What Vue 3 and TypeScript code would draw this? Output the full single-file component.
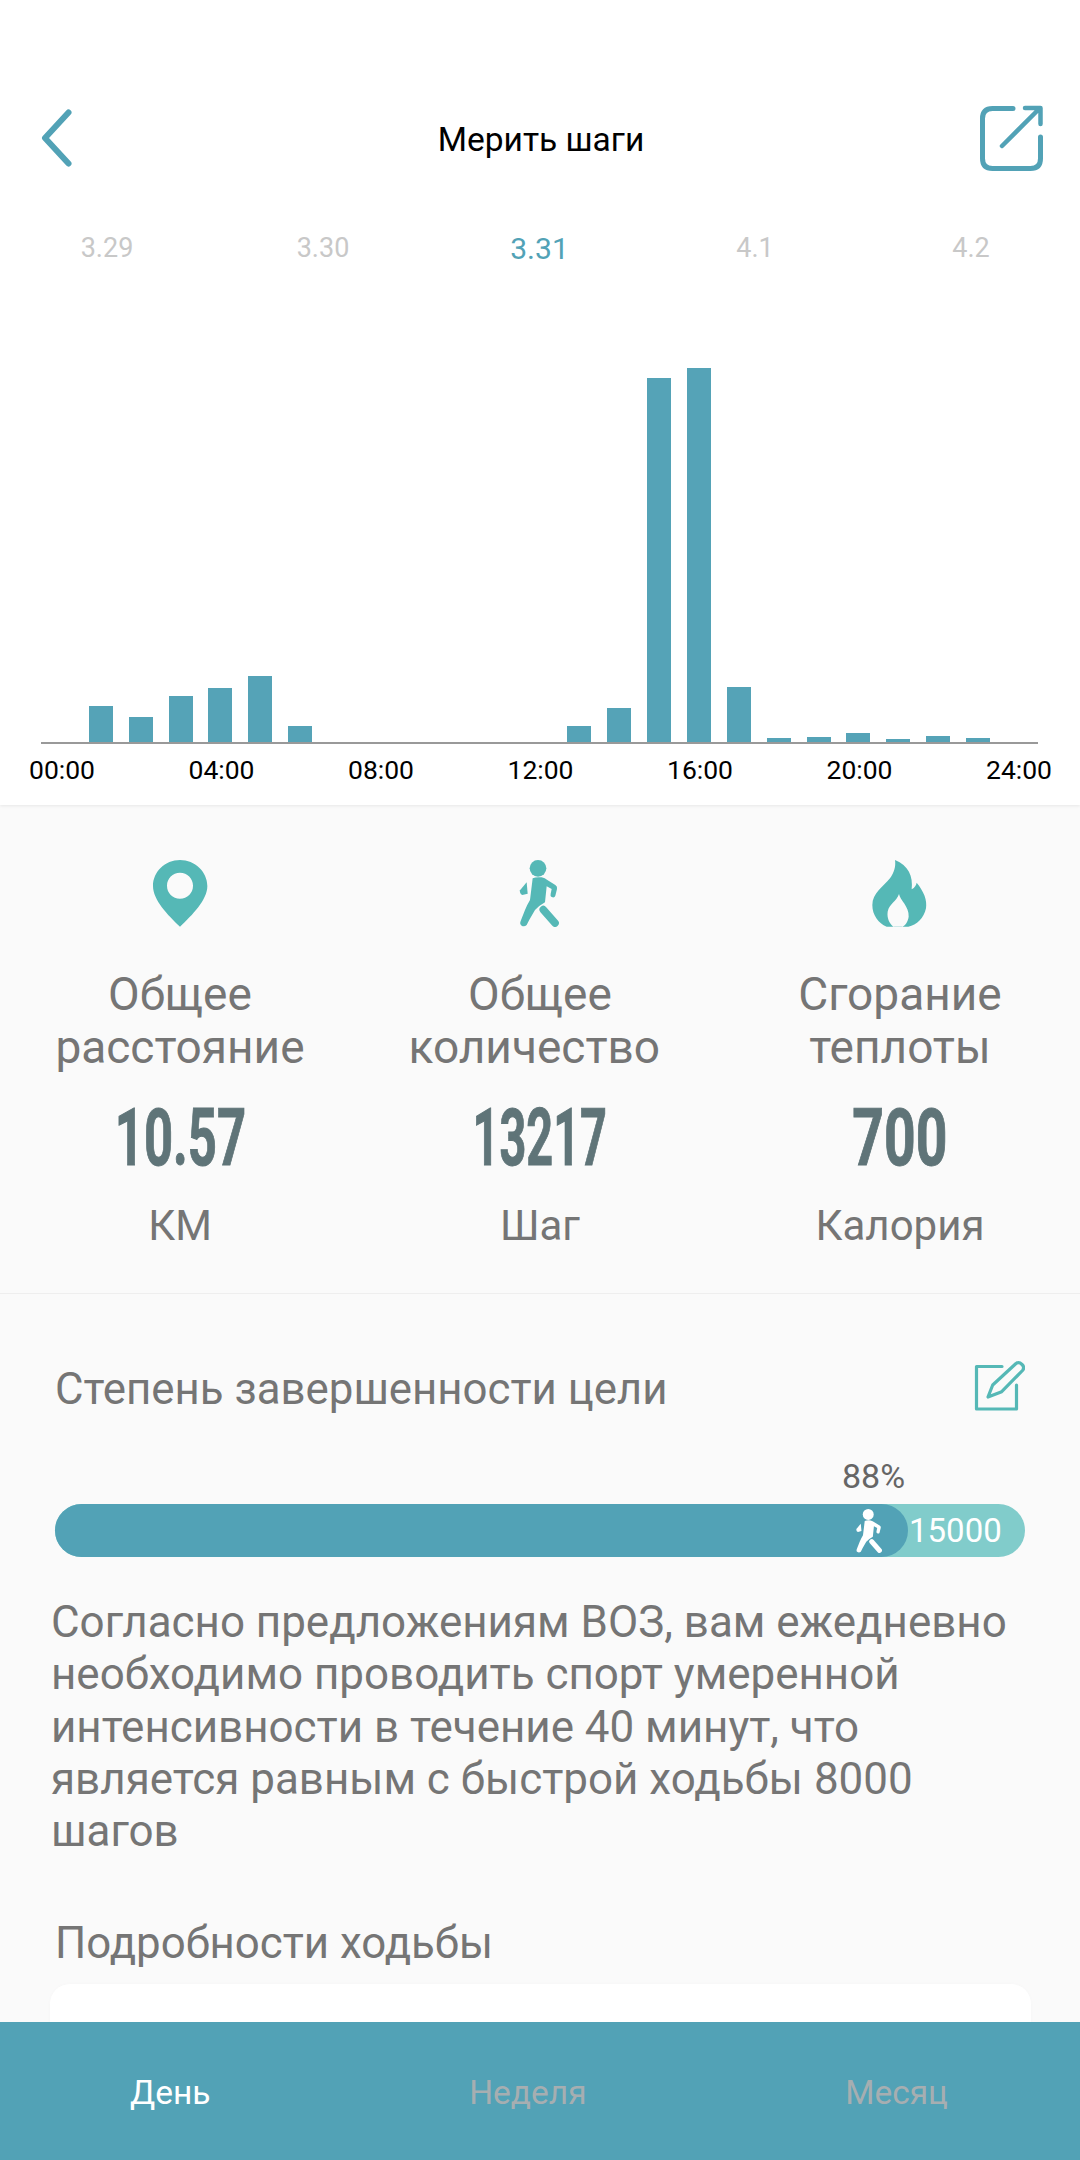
<script setup lang="ts">
const dates = ['3.29', '3.30', '3.31', '4.1', '4.2']
const heights = [0, 36, 25, 46, 54, 66, 16, 0, 0, 0, 0, 0, 0, 16, 34, 364, 374, 55, 4, 5, 9, 3, 6, 4, 0]
const hours = ['00:00', '04:00', '08:00', '12:00', '16:00', '20:00', '24:00']
const stats = [
  { key: 'pin', a: 'Общее', b: 'расстояние', v: '10.57', u: 'КМ', sx: 0.635 },
  { key: 'walk', a: 'Общее', b: 'количество\u00a0', v: '13217', u: 'Шаг', sx: 0.585 },
  { key: 'fire', a: 'Сгорание', b: 'теплоты', v: '700', u: 'Калория', sx: 0.69 },
]
</script>

<template>
  <div class="page">
    <main class="main">
      <section class="top">
        <header class="nav">
          <svg class="back" width="36" height="62" viewBox="0 0 36 62">
            <path d="M30.5 4.5 L7 30 L30.5 55.5" fill="none" stroke="#52a2b6" stroke-width="6" stroke-linecap="round" stroke-linejoin="round" />
          </svg>
          <h1 class="title">Мерить шаги</h1>
          <svg class="share" width="66" height="68" viewBox="0 0 66 68">
            <path d="M35 4.5 H14.5 Q4.5 4.5 4.5 14.5 V54.5 Q4.5 64.5 14.5 64.5 H52.5 Q62.5 64.5 62.5 54.5 V33" fill="none" stroke="#52a2b6" stroke-width="5" stroke-linecap="round" />
            <path d="M24 42 L61 5 M47 4 H62.5 V20" fill="none" stroke="#52a2b6" stroke-width="4.5" stroke-linecap="round" stroke-linejoin="round" />
          </svg>
        </header>
        <div class="dates">
          <span v-for="d in dates" :key="d" class="date" :class="{ on: d === '3.31' }">{{ d }}</span>
        </div>
        <div class="plot">
          <div v-for="(h, i) in heights" :key="i" class="slot">
            <div class="bar" :style="{ height: h + 'px' }"></div>
          </div>
        </div>
        <div class="hours">
          <span v-for="h in hours" :key="h">{{ h }}</span>
        </div>
      </section>

      <section class="stats">
        <div v-for="s in stats" :key="s.key" class="stat">
          <svg v-if="s.key === 'pin'" class="ico" width="120" height="67" viewBox="-2 20 360 201" preserveAspectRatio="xMidYMid meet">
            <path fill="#55b8b6" fill-rule="evenodd" transform="translate(0 -40)" d="M178 60 C223 60 260 96 260 138 C260 180 215 225 178 260 C141 225 97 180 97 138 C97 96 133 60 178 60Z M178 98 C156 98 139 115 139 137 C139 159 156 176 178 176 C200 176 217 159 217 137 C217 115 200 98 178 98Z" />
          </svg>
          <svg v-else-if="s.key === 'walk'" class="ico" width="100" height="67" viewBox="0 45 300 201">
            <circle cx="144" cy="70" r="25" fill="#55b8b6" />
            <path fill="#55b8b6" d="M128 100 Q138 95 155 97 Q165 99 172 105 L196 120 Q203 124 201 132 L196 152 Q193 160 185 156 Q180 153 182 146 L185 132 L170 124 L165 172 Q150 180 135 195 L118 224 L110 240 Q103 246 95 242 Q88 237 92 228 L105 195 Q112 178 120 165 Z" />
            <path fill="#55b8b6" d="M110 112 L90 136 Q88 146 97 150 L113 146 Z" />
            <path d="M160 194 L195 234" fill="none" stroke="#55b8b6" stroke-width="23" stroke-linecap="round" />
          </svg>
          <svg v-else class="ico" width="100" height="67" viewBox="0 30 300 201">
            <path fill="#55b8b6" fill-rule="evenodd" d="M135 30 C175 45 190 80 185 118 C195 112 198 106 200 98 C222 125 232 150 228 175 C222 205 200 225 175 230 L110 230 C85 220 67 195 67 165 C67 130 100 110 120 85 C132 68 138 50 135 30Z M147 132 C150 150 178 170 176 200 C174 215 165 228 155 231 L133 231 C120 225 110 205 113 185 C118 160 140 155 147 132Z" />
          </svg>
          <div class="label">{{ s.a }}<br />{{ s.b }}</div>
          <div class="value"><span :style="{ transform: `scaleX(${s.sx})` }">{{ s.v }}</span></div>
          <div class="unit">{{ s.u }}</div>
        </div>
      </section>

      <section class="goal">
        <div class="goal-head">
          <span>Степень завершенности цели</span>
          <svg width="52" height="52" viewBox="0 0 52 52">
            <path d="M29 6.5 H3.5 V49 H43.5 V25" fill="none" stroke="#55b8b6" stroke-width="3.2" stroke-linejoin="round" stroke-linecap="round" />
            <path d="M15 37 L19.7 25 L43 3.5 Q46 1.5 49 4.5 Q52 7.5 49.5 10.5 L28.7 31.7 Z" fill="#fafafa" stroke="#55b8b6" stroke-width="3.2" stroke-linejoin="round" />
          </svg>
        </div>
        <div class="pct">88%</div>
        <div class="track">
          <div class="fill">
            <svg width="30" height="44" viewBox="85 45 125 201">
              <circle cx="144" cy="70" r="25" fill="#fff" />
              <path fill="#fff" d="M128 100 Q138 95 155 97 Q165 99 172 105 L196 120 Q203 124 201 132 L196 152 Q193 160 185 156 Q180 153 182 146 L185 132 L170 124 L165 172 Q150 180 135 195 L118 224 L110 240 Q103 246 95 242 Q88 237 92 228 L105 195 Q112 178 120 165 Z" />
              <path fill="#fff" d="M110 112 L90 136 Q88 146 97 150 L113 146 Z" />
              <path d="M160 194 L195 234" fill="none" stroke="#fff" stroke-width="23" stroke-linecap="round" />
            </svg>
          </div>
          <span class="target">15000</span>
        </div>
        <p class="note">Согласно предложениям ВОЗ, вам ежедневно необходимо проводить спорт умеренной интенсивности в течение 40 минут, что является равным с быстрой ходьбы 8000 шагов</p>
        <h2 class="sub">Подробности ходьбы</h2>
        <div class="card"></div>
      </section>
    </main>
    <nav class="tabs">
      <span class="tab on">День</span>
      <span class="tab">Неделя</span>
      <span class="tab">Месяц</span>
    </nav>
  </div>
</template>

<style>
html, body { margin: 0; background: #fafafa; }
</style>

<style scoped>
.page {
  width: 1080px;
  height: 2160px;
  display: flex;
  flex-direction: column;
  overflow: hidden;
  background: #fafafa;
  font-family: Roboto, "Noto Sans", sans-serif;
  color: #757575;
}
.main { flex: 1; min-height: 0; overflow: hidden; }
.top {
  height: 805px;
  box-sizing: border-box;
  background: #fff;
  box-shadow: 0 1px 3px rgba(0, 0, 0, 0.08);
  position: relative;
}
.nav {
  height: 120px;
  padding: 80px 36px 0 38px;
  display: grid;
  grid-template-columns: 1fr auto 1fr;
  align-items: center;
}
.back { margin-top: -2px; }
.share { margin-top: -4px; justify-self: end; }
.title { margin: -1px 0 0; font-size: 33.5px; font-weight: 400; color: #000; }
.dates {
  height: 96px;
  margin-left: -1px;
  display: grid;
  grid-template-columns: repeat(5, 216px);
  align-items: center;
  justify-items: center;
}
.date { font-size: 27px; color: #c8c8c8; }
.date.on { font-size: 30px; color: #52a2b6; margin-left: 1px; }
.plot {
  height: 447px;
  margin: 1px 42px 0 41px;
  display: flex;
  align-items: flex-end;
  border-bottom: 2px solid #999;
  box-sizing: border-box;
}
.slot { flex: 1; display: flex; justify-content: center; }
.bar { width: 24px; background: #55a3b7; }
.hours {
  height: 51px;
  padding: 0 28px 0 29px;
  display: flex;
  align-items: center;
  justify-content: space-between;
  font-size: 26.5px;
  color: #000;
}
.stats {
  display: grid;
  grid-template-columns: repeat(3, 360px);
  padding: 55px 0 41px;
  border-bottom: 1px solid #eee;
}
.stat { display: flex; flex-direction: column; align-items: center; text-align: center; }
.ico { display: block; }
.label { margin-top: 41px; font-size: 46px; line-height: 53px; white-space: nowrap; }
.value {
  margin-top: 24px;
  height: 80px;
  line-height: 80px;
  font-size: 80px;
  font-weight: 700;
  color: #5f7478;
}
.value span { display: inline-block; -webkit-text-stroke: 1px #5f7478; }
.unit { margin-top: 22px; font-size: 42px; line-height: 52px; }
.goal { padding: 65px 55px 0; }
.goal-head {
  height: 60px;
  display: flex;
  align-items: center;
  justify-content: space-between;
  font-size: 43.8px;
}
.goal-head svg { margin-top: -7px; }
.pct { margin: 37px 0 8px 787px; height: 40px; line-height: 40px; font-size: 34px; color: #666; }
.track {
  height: 53px;
  border-radius: 27px;
  background: #81cccb;
  display: flex;
  align-items: center;
}
.fill {
  width: 853px;
  height: 53px;
  box-sizing: border-box;
  padding-right: 24px;
  border-radius: 27px;
  background: #52a2b6;
  display: flex;
  align-items: center;
  justify-content: flex-end;
}
.target { margin-left: 1px; font-size: 33px; color: #fff; }
.note {
  margin: 39px 0 0 -4px;
  width: 975px;
  font-size: 43.95px;
  line-height: 52.3px;
}
.sub { margin: 56px 0 0; height: 60px; line-height: 60px; font-size: 43.8px; font-weight: 400; }
.card {
  margin: 11px 0 0 -5px;
  width: 981px;
  height: 120px;
  border-radius: 20px;
  background: #fff;
  box-shadow: 0 0 4px rgba(0, 0, 0, 0.02);
}
.tabs {
  height: 138px;
  flex: none;
  box-sizing: border-box;
  padding: 2px 132px 0 130px;
  background: #52a2b6;
  display: flex;
  align-items: center;
  justify-content: space-between;
  font-size: 33.5px;
  color: #a6aeb1;
}
.tab.on { color: #fff; }
</style>
